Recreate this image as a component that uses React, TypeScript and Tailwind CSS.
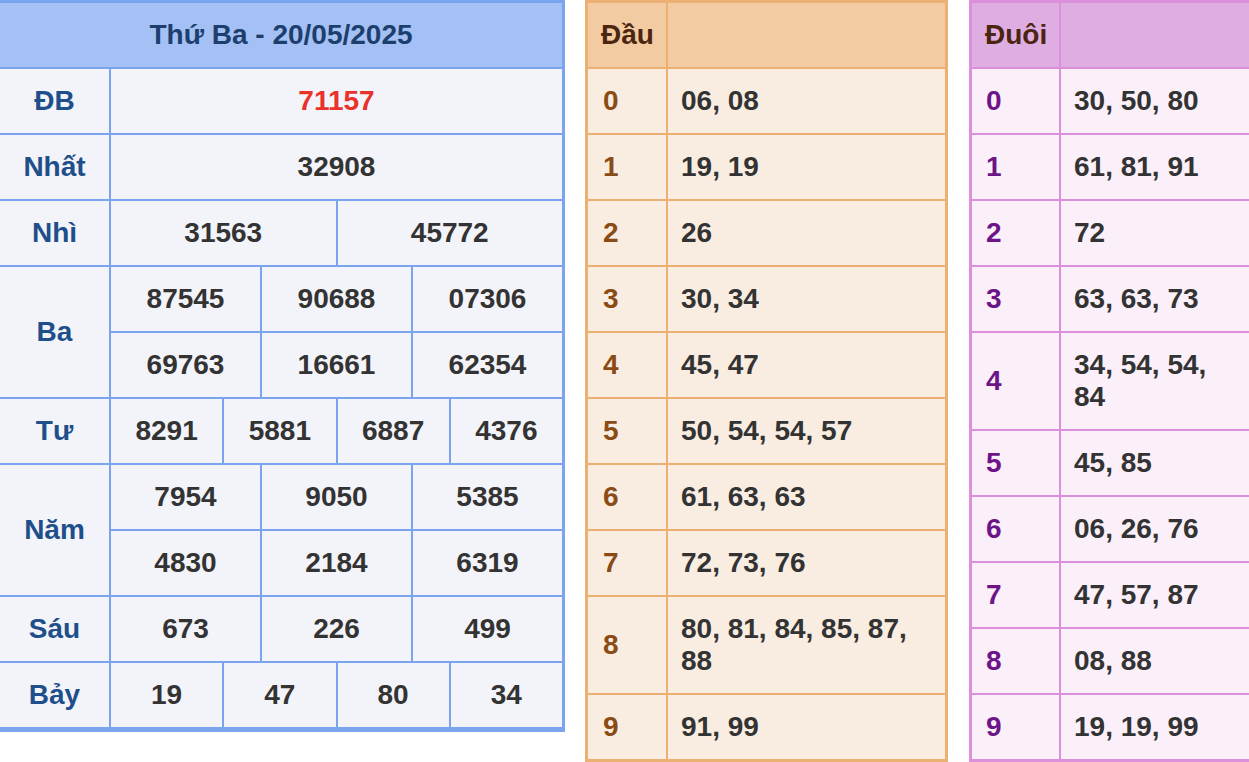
import React from "react";

const font = { fontFamily: '"Liberation Sans", Arial, Helvetica, sans-serif' };

const dau: [string, string][] = [
  ["0", "06, 08"],
  ["1", "19, 19"],
  ["2", "26"],
  ["3", "30, 34"],
  ["4", "45, 47"],
  ["5", "50, 54, 54, 57"],
  ["6", "61, 63, 63"],
  ["7", "72, 73, 76"],
  ["8", "80, 81, 84, 85, 87, 88"],
  ["9", "91, 99"],
];

const duoi: [string, string][] = [
  ["0", "30, 50, 80"],
  ["1", "61, 81, 91"],
  ["2", "72"],
  ["3", "63, 63, 73"],
  ["4", "34, 54, 54, 84"],
  ["5", "45, 85"],
  ["6", "06, 26, 76"],
  ["7", "47, 57, 87"],
  ["8", "08, 88"],
  ["9", "19, 19, 99"],
];

function Lbl({ children, rows2 }: { children: React.ReactNode; rows2?: boolean }) {
  return (
    <div
      className={
        "bg-[#f3f4f9] flex items-center justify-center text-[#1f4f8a] " +
        (rows2 ? "row-span-2" : "")
      }
    >
      {children}
    </div>
  );
}

function Num({ children, span, red }: { children: React.ReactNode; span: string; red?: boolean }) {
  return (
    <div
      className={
        "bg-[#f3f4f9] flex items-center justify-center " +
        span +
        (red ? " text-[#e8322b]" : " text-[#333333]")
      }
    >
      {children}
    </div>
  );
}

export default function App() {
  return (
    <div
      className="w-[1249px] h-[762px] overflow-hidden bg-white flex items-start font-bold text-[28px] leading-[32px]"
      style={font}
    >
      {/* Left results table */}
      <div className="w-[565px] shrink-0 grid grid-cols-[109px_repeat(12,minmax(0,1fr))] auto-rows-[64px] gap-[2px] bg-[#7ba4ef] pt-[3px] pr-[3px] pb-[5px]">
        <div className="col-span-13 bg-[#a4c0f4] flex items-center justify-center text-[#1c3f6e]">
          Thứ Ba - 20/05/2025
        </div>

        <Lbl>ĐB</Lbl>
        <Num span="col-span-12" red>71157</Num>

        <Lbl>Nhất</Lbl>
        <Num span="col-span-12">32908</Num>

        <Lbl>Nhì</Lbl>
        <Num span="col-span-6">31563</Num>
        <Num span="col-span-6">45772</Num>

        <Lbl rows2>Ba</Lbl>
        <Num span="col-span-4">87545</Num>
        <Num span="col-span-4">90688</Num>
        <Num span="col-span-4">07306</Num>
        <Num span="col-span-4">69763</Num>
        <Num span="col-span-4">16661</Num>
        <Num span="col-span-4">62354</Num>

        <Lbl>Tư</Lbl>
        <Num span="col-span-3">8291</Num>
        <Num span="col-span-3">5881</Num>
        <Num span="col-span-3">6887</Num>
        <Num span="col-span-3">4376</Num>

        <Lbl rows2>Năm</Lbl>
        <Num span="col-span-4">7954</Num>
        <Num span="col-span-4">9050</Num>
        <Num span="col-span-4">5385</Num>
        <Num span="col-span-4">4830</Num>
        <Num span="col-span-4">2184</Num>
        <Num span="col-span-4">6319</Num>

        <Lbl>Sáu</Lbl>
        <Num span="col-span-4">673</Num>
        <Num span="col-span-4">226</Num>
        <Num span="col-span-4">499</Num>

        <Lbl>Bảy</Lbl>
        <Num span="col-span-3">19</Num>
        <Num span="col-span-3">47</Num>
        <Num span="col-span-3">80</Num>
        <Num span="col-span-3">34</Num>
      </div>

      {/* Đầu table */}
      <div className="ml-[20px] w-[363px] shrink-0 grid grid-cols-[78px_minmax(0,1fr)] gap-[2px] bg-[#ecb072] p-[3px]">
        <div className="bg-[#f2cba3] h-[64px] flex items-center pl-[13px] text-[#4b2510]">Đầu</div>
        <div className="bg-[#f2cba3]" />
        {dau.map(([k, v]) => (
          <React.Fragment key={k}>
            <div className="bg-[#f9ede2] flex items-center pl-[15px] text-[#8a4b14]">{k}</div>
            <div className="bg-[#f9ede2] py-[16px] pl-[13px] pr-[13px] text-[#333333]">{v}</div>
          </React.Fragment>
        ))}
      </div>

      {/* Đuôi table */}
      <div className="ml-[21px] shrink-0 grid grid-cols-[87px_190px] gap-[2px] bg-[#dc8fdb] p-[3px]">
        <div className="bg-[#deaee3] h-[64px] flex items-center pl-[13px] text-[#4b2510]">Đuôi</div>
        <div className="bg-[#deaee3]" />
        {duoi.map(([k, v]) => (
          <React.Fragment key={k}>
            <div className="bg-[#fbf0fa] flex items-center pl-[14px] text-[#6d1487]">{k}</div>
            <div className="bg-[#fbf0fa] py-[16px] pl-[13px] pr-[20px] text-[#333333]">{v}</div>
          </React.Fragment>
        ))}
      </div>
    </div>
  );
}
